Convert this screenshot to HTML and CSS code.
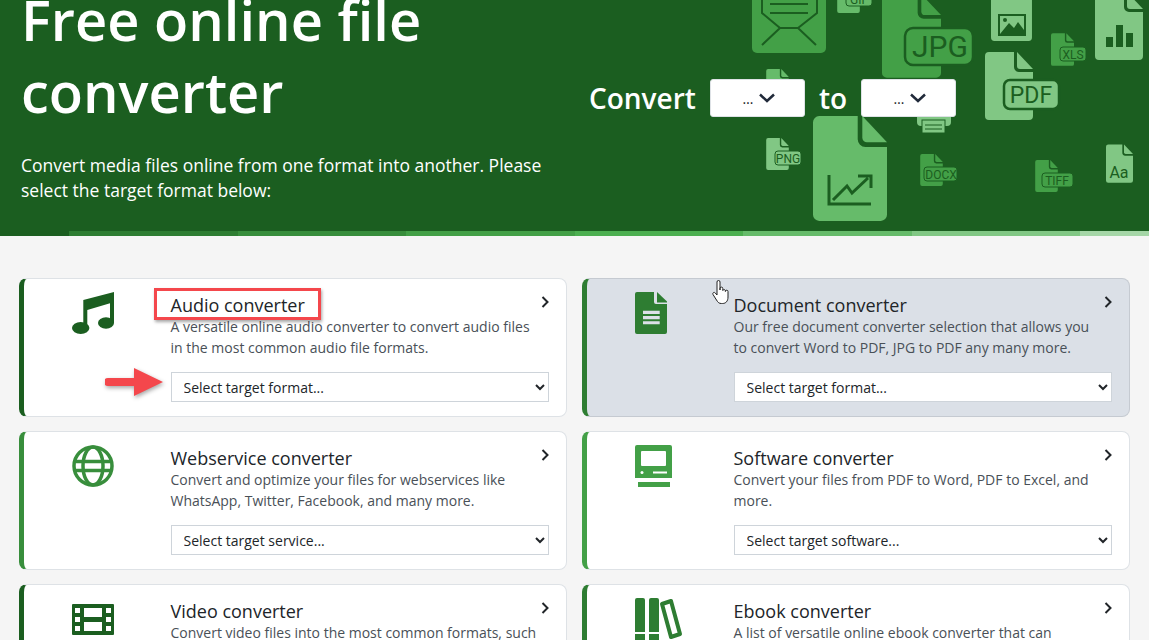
FILE: index.html
```html
<!DOCTYPE html>
<html lang="en">
<head>
    <meta charset="UTF-8">
    <meta name="viewport" content="width=device-width, initial-scale=1.0">
    <title>Free online file converter</title>
    <link rel="stylesheet" href="styles.css">
</head>
<body>
    <header class="hero">
        <svg class="hero-art" viewBox="740 0 409 231" width="409" height="231" aria-hidden="true">
            <defs>
                <symbol id="doc" viewBox="0 0 48 68">
                    <path d="M4 0H29V15a5 5 0 0 0 5 5H48V64a4 4 0 0 1-4 4H4a4 4 0 0 1-4-4V4a4 4 0 0 1 4-4z"/>
                    <path d="M32 0L48 17H35a3 3 0 0 1-3-3z"/>
                </symbol>
            </defs>

            <!-- envelope -->
            <path class="g4" d="M752 -10H826V48a5 5 0 0 1-5 5H757a5 5 0 0 1-5-5z"/>
            <path class="line" d="M762 0V13L780 28H798L817 13V0M780 28L762 45M798 28L816 45M770 4H808M770 13H808"/>

            <!-- gif -->
            <use href="#doc" x="837" y="-19" width="23" height="32" class="g6"/>
            <rect x="846" y="-8" width="26" height="14" rx="3" class="g6 line-thin"/>
            <text x="859" y="4" class="label" font-size="12">GIF</text>

            <!-- jpg -->
            <use href="#doc" x="882" y="-6" width="59" height="84" class="g4"/>
            <rect x="905" y="28" width="68" height="37" rx="8" class="g4 line-box"/>
            <text x="940" y="57" class="label" font-size="30">JPG</text>

            <!-- image -->
            <use href="#doc" x="991" y="-17" width="41" height="58" class="g8"/>
            <rect x="999" y="15" width="26" height="20" class="line"/>
            <path class="ink" d="M1000 34L1009 23L1014 28L1018 22L1024 30V34z"/>
            <circle class="ink" cx="1005" cy="20" r="2"/>

            <!-- xls -->
            <use href="#doc" x="1051" y="33" width="23" height="33" class="g4"/>
            <rect x="1060" y="47" width="26" height="14" rx="3" class="g4 line-thin"/>
            <text x="1073" y="59" class="label" font-size="12">XLS</text>

            <!-- bars -->
            <use href="#doc" x="1095" y="-8" width="48" height="68" class="g8"/>
            <path class="ink" d="M1106 37h7v10h-7zM1116 25h7v22h-7zM1126 33h7v14h-7z"/>

            <!-- pdf -->
            <use href="#doc" x="985" y="52" width="48" height="68" class="g8"/>
            <rect x="1004" y="80" width="55" height="29" rx="6" class="g8 line-box"/>
            <text x="1031" y="103" class="label" font-size="23">PDF</text>

            <!-- png behind the first dropdown -->
            <use href="#doc" x="766" y="69" width="23" height="32" class="g6"/>

            <!-- big chart -->
            <use href="#doc" x="813" y="116" width="74" height="105" class="g6"/>
            <path class="line line-3" d="M829 175V204H871M833 200L847 186L852 193L868 178M858 176H871V188"/>

            <!-- printer -->
            <path class="g8" d="M917 100H951V122a4 4 0 0 1-4 4H921a4 4 0 0 1-4-4z"/>
            <rect x="922" y="120" width="23" height="13" class="g8 line-thin"/>
            <path class="line-thin" d="M925 125H942M925 129H942"/>

            <!-- png -->
            <use href="#doc" x="766" y="138" width="23" height="32" class="g8"/>
            <rect x="775" y="151" width="26" height="14" rx="3" class="g8 line-thin"/>
            <text x="788" y="163" class="label" font-size="12">PNG</text>

            <!-- docx -->
            <use href="#doc" x="920" y="154" width="23" height="32" class="g4"/>
            <rect x="924" y="167" width="33" height="14" rx="3" class="g4 line-thin"/>
            <text x="941" y="179" class="label" font-size="12">DOCX</text>

            <!-- tiff -->
            <use href="#doc" x="1035" y="160" width="23" height="32" class="g4"/>
            <rect x="1042" y="173" width="31" height="14" rx="3" class="g4 line-thin"/>
            <text x="1057" y="185" class="label" font-size="12">TIFF</text>

            <!-- font -->
            <use href="#doc" x="1106" y="144" width="27" height="39" class="g8"/>
            <text x="1119" y="178" class="label" font-size="16">Aa</text>
        </svg>

        <div class="hero-text">
            <h1>Free online file converter</h1>
            <p>Convert media files online from one format into another. Please select the target format below:</p>
        </div>

        <div class="convert-row">
            <span>Convert</span>
            <button type="button" class="pick">
                …
                <svg width="16" height="10" viewBox="0 0 16 10"><path d="M1 1.5L8 8L15 1.5"/></svg>
            </button>
            <span>to</span>
            <button type="button" class="pick">
                …
                <svg width="16" height="10" viewBox="0 0 16 10"><path d="M1 1.5L8 8L15 1.5"/></svg>
            </button>
        </div>
    </header>

    <div class="stripe">
        <i class="s1"></i><i class="s2"></i><i class="s3"></i><i class="s4"></i>
        <i class="s5"></i><i class="s6"></i><i class="s7"></i><i class="s8"></i>
    </div>

    <main class="cards">
        <section class="card c-dark">
            <div class="card-icon">
                <svg width="44" height="43" viewBox="0 0 44 43">
                    <path d="M11.300 8L42 0V31H38V11.300L15.300 18V36H11.300z"/>
                    <ellipse cx="8.700" cy="36" rx="8.700" ry="6"/>
                    <ellipse cx="34" cy="31" rx="8" ry="5.800"/>
                </svg>
            </div>
            <div class="card-body">
                <div class="card-title">
                    <h2>Audio converter</h2>
                    <svg class="go" width="8" height="12" viewBox="0 0 8 12"><path d="M1.5 1L6.5 6L1.5 11"/></svg>
                </div>
                <p>A versatile online audio converter to convert audio files in the most common audio file formats.</p>
                <select><option>Select target format...</option></select>
            </div>
            <div class="mark-box"></div>
            <svg class="mark-arrow" width="60" height="34" viewBox="0 0 60 34">
                <path d="M3 11H29V1L58 15L29 29V19H3a4 4 0 0 1 0-8z"/>
            </svg>
        </section>

        <section class="card card-hover c-mid">
            <div class="card-icon">
                <svg width="33" height="42" viewBox="0 0 33 42">
                    <path d="M2 0H19V10a2 2 0 0 0 2 2H32V40a2 2 0 0 1-2 2H2a2 2 0 0 1-2-2V2a2 2 0 0 1 2-2z"/>
                    <path d="M22 0L32 9.500V10.500H22z"/>
                    <path class="cut" d="M8 18.700H24.700V22H8zM8 24H24.700V27.300H8zM8 29.300H24.700V32.300H8z"/>
                </svg>
            </div>
            <div class="card-body">
                <div class="card-title">
                    <h2>Document converter</h2>
                    <svg class="go" width="8" height="12" viewBox="0 0 8 12"><path d="M1.5 1L6.5 6L1.5 11"/></svg>
                </div>
                <p>Our free document converter selection that allows you to convert Word to PDF, JPG to PDF any many more.</p>
                <select><option>Select target format...</option></select>
            </div>
            <svg class="hand" width="18" height="25" viewBox="0 0 18 25">
                <path d="M5 2a1.5 1.5 0 0 1 3 0V10V8.5a1.4 1.4 0 0 1 2.8 0V10.5a1.4 1.4 0 0 1 2.6 0V11.5a1.3 1.3 0 0 1 2.6 0V17c0 4-2 6.500-5.500 6.500H9.500C7 23.500 6 22.500 4.500 20L1 14.500C.2 13 2 11.500 3.300 13L5 15z"/>
            </svg>
        </section>

        <section class="card c-green">
            <div class="card-icon">
                <svg class="outline" width="42" height="42" viewBox="0 0 42 42">
                    <circle cx="21" cy="21" r="19"/>
                    <ellipse cx="21" cy="21" rx="10" ry="19"/>
                    <path d="M3 16.500H39M3 25.500H39"/>
                </svg>
            </div>
            <div class="card-body">
                <div class="card-title">
                    <h2>Webservice converter</h2>
                    <svg class="go" width="8" height="12" viewBox="0 0 8 12"><path d="M1.5 1L6.5 6L1.5 11"/></svg>
                </div>
                <p>Convert and optimize your files for webservices like WhatsApp, Twitter, Facebook, and many more.</p>
                <select><option>Select target service...</option></select>
            </div>
        </section>

        <section class="card c-light">
            <div class="card-icon">
                <svg width="37" height="42" viewBox="0 0 37 42">
                    <path d="M2 0H35a2 2 0 0 1 2 2V33H0V2a2 2 0 0 1 2-2zM3 37H35V42H3z"/>
                    <rect class="cut" x="6" y="6" width="25" height="15" rx="1"/>
                    <circle class="cut" cx="7" cy="27.500" r="1.500"/>
                    <rect class="cut" x="18" y="26.500" width="14" height="2"/>
                </svg>
            </div>
            <div class="card-body">
                <div class="card-title">
                    <h2>Software converter</h2>
                    <svg class="go" width="8" height="12" viewBox="0 0 8 12"><path d="M1.5 1L6.5 6L1.5 11"/></svg>
                </div>
                <p>Convert your files from PDF to Word, PDF to Excel, and more.</p>
                <select><option>Select target software...</option></select>
            </div>
        </section>

        <section class="card c-dark">
            <div class="card-icon card-icon-film">
                <svg width="42" height="31" viewBox="0 0 42 31">
                    <rect width="42" height="31" rx="1"/>
                    <path class="cut" d="M3 4H8V9H3zM3 13H8V18H3zM3 22H8V27H3zM34 4H39V9H34zM34 13H39V18H34zM34 22H39V27H34zM12 4H30V13H12zM12 18H30V27H12z"/>
                </svg>
            </div>
            <div class="card-body">
                <div class="card-title">
                    <h2>Video converter</h2>
                    <svg class="go" width="8" height="12" viewBox="0 0 8 12"><path d="M1.5 1L6.5 6L1.5 11"/></svg>
                </div>
                <p>Convert video files into the most common formats, such as MP4, AVI, MOV and more.</p>
                <select><option>Select target format...</option></select>
            </div>
        </section>

        <section class="card c-mid">
            <div class="card-icon card-icon-books">
                <svg width="48" height="50" viewBox="0 0 48 50">
                    <path d="M2 0H8a2 2 0 0 1 2 2V50H0V2a2 2 0 0 1 2-2zM16 0H22a2 2 0 0 1 2 2V50H14V2a2 2 0 0 1 2-2z"/>
                    <path class="cut" d="M0 34H10V36H0zM14 34H24V36H14z"/>
                    <path class="book" d="M27 6L36 3L45 36L36 39z"/>
                </svg>
            </div>
            <div class="card-body">
                <div class="card-title">
                    <h2>Ebook converter</h2>
                    <svg class="go" width="8" height="12" viewBox="0 0 8 12"><path d="M1.5 1L6.5 6L1.5 11"/></svg>
                </div>
                <p>A list of versatile online ebook converter that can convert your text documents to the right format.</p>
                <select><option>Select target format...</option></select>
            </div>
        </section>
    </main>
</body>
</html>
```

FILE: styles.css
```css
html, body {
    margin: 0;
    height: 640px;
    overflow: hidden;
}

body {
    font-family: "Open Sans", "Liberation Sans", sans-serif;
    background-color: #f5f5f5;
    color: #212529;
}

.hero {
    position: relative;
    display: flex;
    align-items: flex-start;
    height: 231px;
    overflow: hidden;
    background-color: #1b5e20;
    color: #fff;
}

.hero-art {
    position: absolute;
    left: 740px;
    top: 0;
}

.hero-text {
    box-sizing: border-box;
    width: 589px;
    padding: 0 21px;
}

.hero-text h1 {
    margin: -17px 0 0;
    font-size: 56px;
    font-weight: 600;
    line-height: 72px;
    width: 430px;
}

.hero-text p {
    margin: 26px 0 0;
    font-size: 17.5px;
    line-height: 25px;
}

.convert-row {
    position: relative;
    display: flex;
    align-items: center;
    gap: 14px;
    margin-top: 79px;
    font-size: 28px;
    font-weight: 600;
}

.pick {
    display: flex;
    align-items: center;
    justify-content: center;
    gap: 6px;
    width: 95px;
    height: 38px;
    padding: 0 0 0 3px;
    border: 1px solid #dee2e6;
    border-radius: 3px;
    background-color: #fff;
    color: #212529;
    font-family: inherit;
    font-size: 14px;
}

.pick svg path {
    fill: none;
    stroke: #212a3a;
    stroke-width: 2.5;
}

.g4 { fill: #43a047; }
.g6 { fill: #66bb6a; }
.g8 { fill: #81c784; }

.ink { fill: #1b5e20; }

.line, .line-thin, .line-box {
    stroke: #1b5e20;
}

.line {
    fill: none;
    stroke-width: 2;
}

.line-3 {
    stroke-width: 3;
}

.line-thin {
    stroke-width: 1;
}

.line-box {
    stroke-width: 2.5;
}

.label {
    fill: #1b5e20;
    font-family: Roboto, sans-serif;
    text-anchor: middle;
}

.stripe {
    display: flex;
    height: 5px;
}

.stripe i {
    flex: 0 0 168.5px;
}

.stripe .s1 {
    flex: 0 0 69px;
    background-color: #1b5e20;
}

.s2 { background-color: #2e7d32; }
.s3 { background-color: #388e3c; }
.s4 { background-color: #43a047; }
.s5 { background-color: #4caf50; }
.s6 { background-color: #66bb6a; }
.s7 { background-color: #81c784; }

.stripe .s8 {
    flex: 1;
    background-color: #a5d6a7;
}

.cards {
    display: grid;
    grid-template-columns: 1fr 1fr;
    gap: 14px 15px;
    padding: 42px 19px 0;
}

.card {
    position: relative;
    display: flex;
    box-sizing: border-box;
    height: 139px;
    border: 1px solid #dee2e6;
    border-left-width: 5px;
    border-radius: 8px;
    background-color: #fff;
    --accent: #1b5e20;
    border-left-color: var(--accent);
}

.c-dark { --accent: #1b5e20; }
.c-mid { --accent: #2e7d32; }
.c-green { --accent: #388e3c; }
.c-light { --accent: #43a047; }

.card-hover {
    background-color: #dbe0e7;
    border-color: #c5cad1;
    border-left-color: var(--accent);
    --cut: #dbe0e7;
}

.card-icon {
    flex: 0 0 146.5px;
    box-sizing: border-box;
    padding: 13px 0 0 48px;
}

.card-icon svg {
    display: block;
    fill: var(--accent);
}

.card-icon .cut {
    fill: var(--cut, #fff);
}

.card-icon .outline {
    fill: none;
    stroke: var(--accent);
    stroke-width: 3.5;
}

.card-icon-film {
    padding-top: 19px;
}

.card-icon-books {
    padding-top: 13px;
}

.card-icon .book {
    fill: none;
    stroke: var(--accent);
    stroke-width: 4;
    stroke-linejoin: round;
}

.card-body {
    flex: 1;
    min-width: 0;
    padding: 15px 17.5px 0 0;
}

.card-title {
    display: flex;
    align-items: flex-start;
    justify-content: space-between;
}

.card-title h2 {
    margin: 0;
    font-size: 18px;
    font-weight: 500;
    line-height: 22px;
}

.go {
    margin-top: 2px;
}

.go path {
    fill: none;
    stroke: #212529;
    stroke-width: 2;
}

.card-body p {
    margin: 1px 0 0;
    padding-right: 10px;
    font-size: 14px;
    line-height: 20.5px;
    color: #495057;
}

.card-body select {
    display: block;
    width: 100%;
    height: 30px;
    margin-top: 14px;
    padding: 0 8px;
    border: 1px solid #ced4da;
    border-radius: 0;
    background-color: #fff;
    color: #212529;
    font-family: inherit;
    font-size: 14px;
}

.mark-box {
    position: absolute;
    left: 130px;
    top: 9px;
    box-sizing: border-box;
    width: 167px;
    height: 32px;
    border: 3px solid #f4474c;
    box-shadow: 1px 2px 3px rgba(0, 0, 0, 0.35);
}

.mark-arrow {
    position: absolute;
    left: 81px;
    top: 88px;
    fill: #f4474c;
    filter: drop-shadow(1px 2px 2px rgba(0, 0, 0, 0.35));
}

.hand {
    position: absolute;
    left: 125px;
    top: 1px;
    fill: #fff;
    stroke: #222;
    stroke-width: 1;
}
```
